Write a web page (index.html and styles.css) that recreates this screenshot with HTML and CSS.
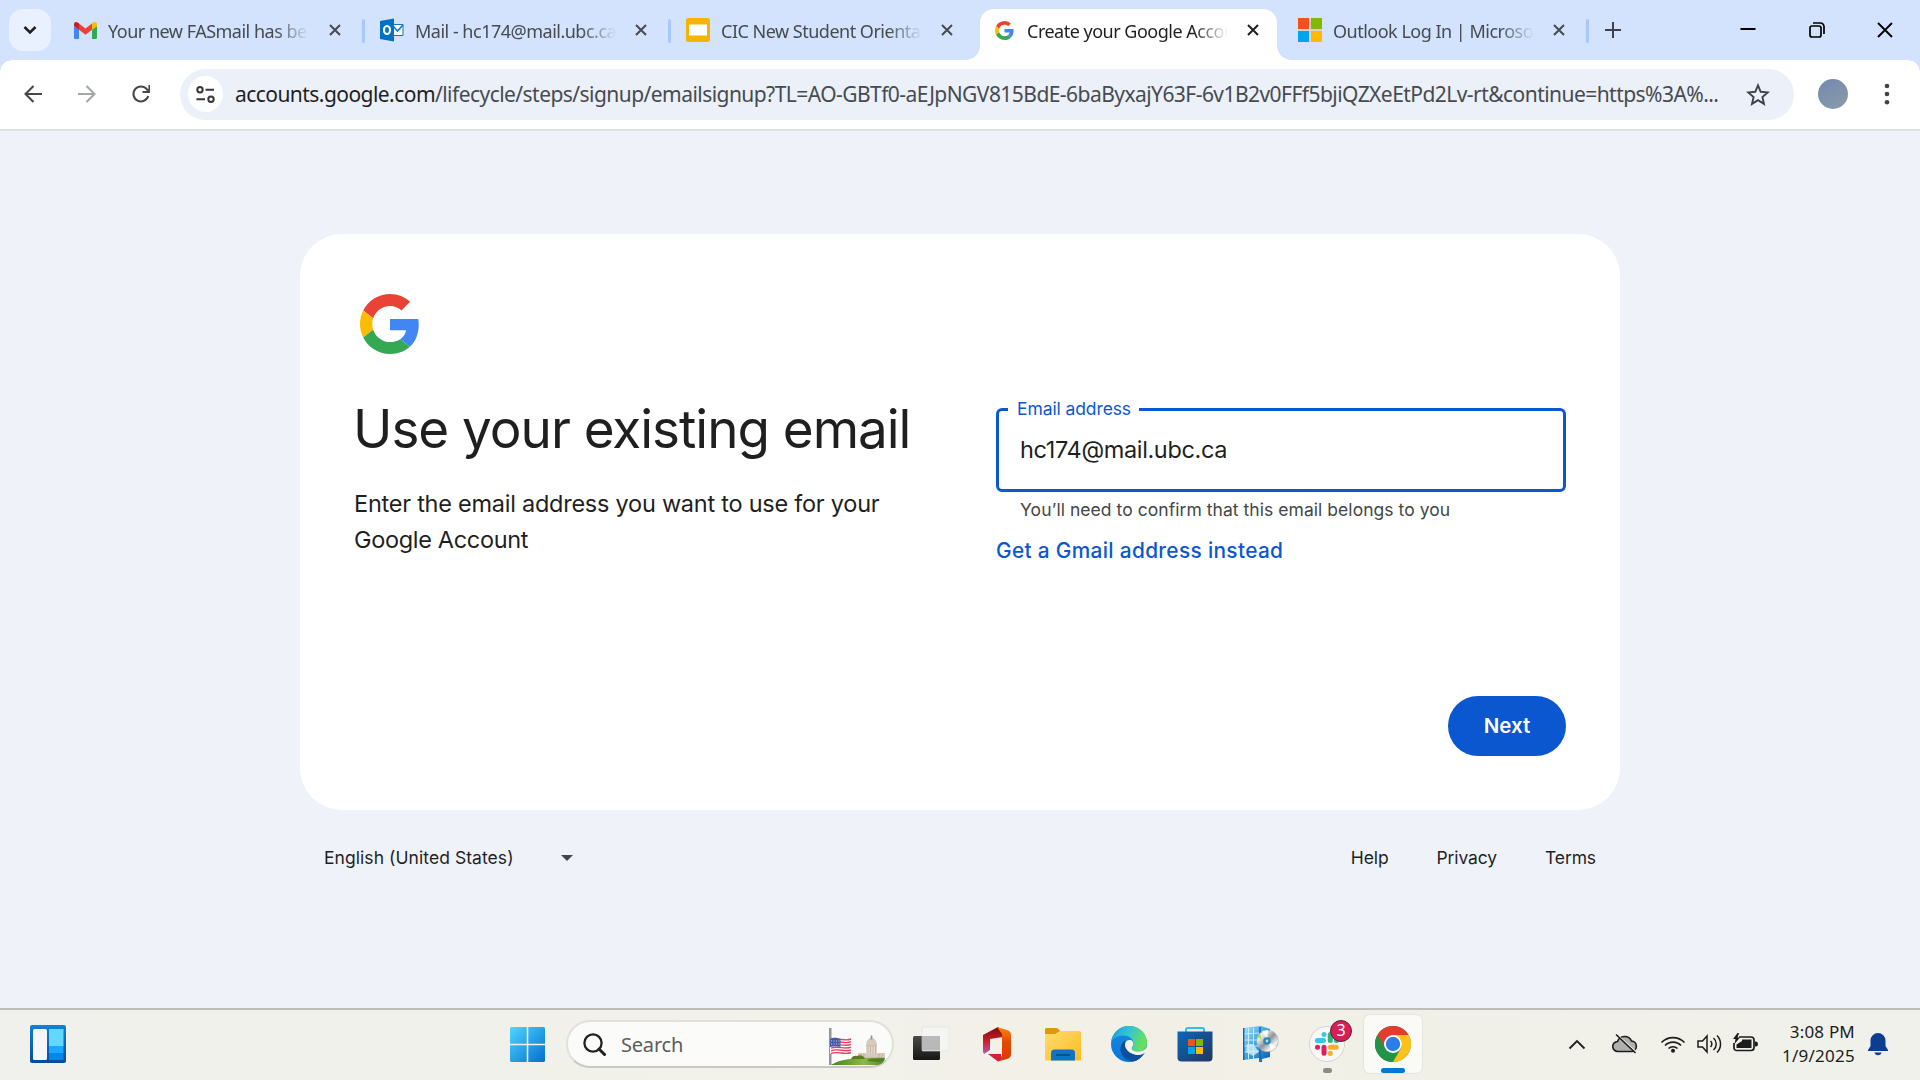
FILE: index.html
```html
<!DOCTYPE html>
<html lang="en">
<head>
<meta charset="utf-8">
<title>Create your Google Account</title>
<link rel="stylesheet" href="styles.css">
</head>
<body>
<svg class="defs" width="0" height="0" aria-hidden="true">
  <defs>
    <symbol id="google" viewBox="2 2 44 44">
      <path fill="#EA4335" d="M24 9.5c3.54 0 6.71 1.22 9.21 3.6l6.85-6.85C35.9 2.38 30.47 0 24 0 14.62 0 6.51 5.38 2.56 13.22l7.98 6.19C12.43 13.72 17.74 9.5 24 9.5z" transform="translate(2 2) scale(.9167)"/>
      <path fill="#4285F4" d="M46.98 24.55c0-1.57-.15-3.09-.38-4.55H24v9.02h12.94c-.58 2.96-2.26 5.48-4.78 7.18l7.73 6c4.51-4.18 7.09-10.36 7.09-17.65z" transform="translate(2 2) scale(.9167)"/>
      <path fill="#FBBC05" d="M10.53 28.59c-.48-1.45-.76-2.99-.76-4.59s.27-3.14.76-4.59l-7.98-6.19C.92 16.46 0 20.12 0 24c0 3.88.92 7.54 2.56 10.78l7.97-6.19z" transform="translate(2 2) scale(.9167)"/>
      <path fill="#34A853" d="M24 48c6.48 0 11.93-2.13 15.89-5.81l-7.73-6c-2.15 1.45-4.92 2.3-8.16 2.3-6.26 0-11.57-4.22-13.47-9.91l-7.98 6.19C6.51 42.62 14.62 48 24 48z" transform="translate(2 2) scale(.9167)"/>
    </symbol>
    <symbol id="x" viewBox="0 0 12 12"><path d="M1 1l10 10M11 1L1 11" fill="none" stroke="currentColor" stroke-width="2"/></symbol>
    <linearGradient id="gStart" x1="0" y1="0" x2="1" y2="1"><stop offset="0" stop-color="#4fd6ff"/><stop offset="1" stop-color="#0070d0"/></linearGradient>
    <linearGradient id="gPanel" x1="0" y1="0" x2="0" y2="1"><stop offset="0" stop-color="#0f82d8"/><stop offset="1" stop-color="#0b4a93"/></linearGradient>
    <linearGradient id="gDark" x1="0" y1="0" x2="0" y2="1"><stop offset="0" stop-color="#4a4a48"/><stop offset="1" stop-color="#161616"/></linearGradient>
    <linearGradient id="gOfficeL" x1="0" y1="0" x2="0" y2="1"><stop offset="0" stop-color="#7a0c0a"/><stop offset=".55" stop-color="#d01f2c"/><stop offset="1" stop-color="#b05cb0"/></linearGradient>
    <linearGradient id="gOfficeR" x1="0" y1="0" x2="0" y2="1"><stop offset="0" stop-color="#fb8305"/><stop offset=".45" stop-color="#e04a05"/><stop offset="1" stop-color="#d83a02"/></linearGradient>
    <linearGradient id="gFolder" x1="0" y1="0" x2="1" y2="1"><stop offset="0" stop-color="#ffdc70"/><stop offset="1" stop-color="#fdbc1e"/></linearGradient>
    <linearGradient id="gEdgeTop" x1="0" y1="0" x2="1" y2=".3"><stop offset="0" stop-color="#1b9ad8"/><stop offset=".5" stop-color="#34c3d8"/><stop offset="1" stop-color="#66e05a"/></linearGradient>
    <linearGradient id="gEdgeLeft" x1="0" y1="0" x2="0" y2="1"><stop offset="0" stop-color="#1a8cd8"/><stop offset="1" stop-color="#0a74dc"/></linearGradient>
    <linearGradient id="gStore" x1="0" y1="0" x2="1" y2="1"><stop offset="0" stop-color="#0a68bd"/><stop offset="1" stop-color="#24355e"/></linearGradient>
    <linearGradient id="gServer" x1="0" y1="0" x2="1" y2="1"><stop offset="0" stop-color="#a5e3fb"/><stop offset=".5" stop-color="#3aa2e0"/><stop offset="1" stop-color="#0e5aa2"/></linearGradient>
    <linearGradient id="gDisc" x1="0" y1="0" x2="1" y2="1"><stop offset="0" stop-color="#a8d8a0"/><stop offset=".25" stop-color="#ededed"/><stop offset=".5" stop-color="#8f9498"/><stop offset=".75" stop-color="#f4f4f4"/><stop offset="1" stop-color="#9a9fa5"/></linearGradient>
    <linearGradient id="gHill" x1="0" y1="0" x2="1" y2="0"><stop offset="0" stop-color="#3f8420"/><stop offset=".6" stop-color="#8db848"/><stop offset="1" stop-color="#4f8a2a"/></linearGradient>
  </defs>
</svg>

<header class="tabstrip">
  <button class="tab-search"><svg width="14" height="10" viewBox="0 0 14 10"><path d="M1.5 2l5.5 5.5L12.500 2" fill="none" stroke="#1f1f1f" stroke-width="2.500"/></svg></button>
  <div class="tab first">
    <span class="favicon"><svg width="23" height="17" viewBox="0 0 23 17"><path fill="#4285f4" d="M0 4l5 3.600V17H1.500A1.500 1.500 0 0 1 0 15.500z"/><path fill="#34a853" d="M23 4l-5 3.600V17h3.500a1.500 1.500 0 0 0 1.500-1.500z"/><path fill="#ea4335" d="M5 1.500l6.500 4.900L18 1.500v6.300l-6.500 4.900L5 7.800z"/><path fill="#c5221f" d="M0 2.200C0 .2 2.200-.6 3.800.6L5 1.500v6.300L0 4.100z"/><path fill="#fbbc04" d="M23 2.200c0-2-2.200-2.800-3.800-1.600L18 1.500v6.300l5-3.700z"/></svg></span>
    <span class="tab-title">Your new FASmail has been</span>
    <svg class="tab-close"><use href="#x"/></svg>
  </div>
  <div class="tab">
    <span class="favicon"><svg width="24" height="24" viewBox="0 0 24 24"><path fill="#fff" stroke="#1475c8" d="M12 6.500h11v11H12z"/><path fill="none" stroke="#1475c8" stroke-width="1.600" d="M13 8l4.500 5L23 7"/><path fill="#0072c6" d="M0 3L14 .5v23L0 21z"/><ellipse cx="7" cy="12" rx="3" ry="4" fill="none" stroke="#fff" stroke-width="2.200"/></svg></span>
    <span class="tab-title">Mail - hc174@mail.ubc.ca</span>
    <svg class="tab-close"><use href="#x"/></svg>
  </div>
  <div class="tab plain">
    <span class="favicon"><svg width="24" height="24" viewBox="0 0 24 24"><rect width="24" height="24" rx="2.500" fill="#f5b400"/><path fill="#fff" d="M3 6.500h18v11H3z"/></svg></span>
    <span class="tab-title">CIC New Student Orientation</span>
    <svg class="tab-close"><use href="#x"/></svg>
  </div>
  <div class="tab active">
    <span class="favicon"><svg width="19" height="19"><use href="#google"/></svg></span>
    <span class="tab-title">Create your Google Account</span>
    <svg class="tab-close"><use href="#x"/></svg>
  </div>
  <div class="tab">
    <span class="favicon"><svg width="24" height="24" viewBox="0 0 24 24"><path fill="#d5d5d5" d="M0 0h24v24H0z"/><path fill="#f25022" d="M0 0h11v11H0z"/><path fill="#7fba00" d="M13 0h11v11H13z"/><path fill="#00a4ef" d="M0 13h11v11H0z"/><path fill="#ffb900" d="M13 13h11v11H13z"/></svg></span>
    <span class="tab-title">Outlook Log In | Microsoft</span>
    <svg class="tab-close"><use href="#x"/></svg>
  </div>
  <svg class="new-tab" width="16" height="16" viewBox="0 0 16 16"><path d="M8 0v16M0 8h16" stroke="#3f4247" stroke-width="2"/></svg>
  <div class="window-buttons">
    <svg width="16" height="16" viewBox="0 0 16 16"><path d="M.5 7h15" stroke="#000" stroke-width="2"/></svg>
    <svg width="16" height="16" viewBox="0 0 16 16"><rect x="1" y="4" width="11" height="11" rx="2" fill="none" stroke="#000" stroke-width="1.700"/><path d="M4 1h7.500A3.500 3.500 0 0 1 15 4.500V12" fill="none" stroke="#000" stroke-width="1.700"/></svg>
    <svg width="16" height="16" viewBox="0 0 16 16"><path d="M1 1l14 14M15 1L1 15" stroke="#000" stroke-width="1.900"/></svg>
  </div>
</header>

<nav class="toolbar">
  <svg class="nav-icon" width="18" height="18" viewBox="0 0 18 18"><path d="M9.500 1L1.500 9l8 8M1.500 9H18" fill="none" stroke="#45484c" stroke-width="2.100"/></svg>
  <svg class="nav-icon" width="18" height="18" viewBox="0 0 18 18"><path d="M8.500 1l8 8-8 8M16.500 9H0" fill="none" stroke="#a3a6a9" stroke-width="2.100"/></svg>
  <svg class="nav-icon" width="18" height="18" viewBox="0 0 18 18"><path d="M16.200 11A7.500 7.500 0 1 1 14.800 4.200L17 6.500M17.500 0v7h-7" fill="none" stroke="#45484c" stroke-width="2.100"/></svg>
  <div class="omnibox">
    <span class="site-chip"><svg width="19" height="17" viewBox="0 0 19 17"><g fill="none" stroke="#33363a" stroke-width="2"><circle cx="4" cy="3.700" r="2.700"/><path d="M9.500 3.700H18M.5 13.300H9"/><circle cx="15" cy="13.300" r="2.700"/></g></svg></span>
    <span class="url"><b>accounts.google.com</b>/lifecycle/steps/signup/emailsignup?TL=AO-GBTf0-aEJpNGV815BdE-6baByxajY63F-6v1B2v0FFf5bjiQZXeEtPd2Lv-rt&amp;continue=https%3A%...</span>
    <svg class="star" width="24" height="23" viewBox="0 0 24 23"><path d="M12 2.300l2.700 6.500 7 .6-5.300 4.600 1.600 6.900L12 17.200 6 20.900l1.600-6.900-5.300-4.600 7-.6z" fill="none" stroke="#3f4247" stroke-width="1.900"/></svg>
  </div>
  <span class="avatar"></span>
  <svg class="menu" width="6" height="22" viewBox="0 0 6 22"><g fill="#3f4247"><circle cx="3" cy="3" r="2.300"/><circle cx="3" cy="11" r="2.300"/><circle cx="3" cy="19.300" r="2.300"/></g></svg>
</nav>

<main class="page">
  <section class="card">
    <svg class="logo" width="60" height="60"><use href="#google"/></svg>
    <div class="columns">
      <div class="intro">
        <h1>Use your existing email</h1>
        <p><span class="p1">Enter the email address you want to use for your</span><br><span class="p2">Google Account</span></p>
      </div>
      <div class="form">
        <div class="field">
          <span class="label">Email address</span>
          <span class="value">hc174@mail.ubc.ca</span>
        </div>
        <div class="helper">You’ll need to confirm that this email belongs to you</div>
        <a class="link">Get a Gmail address instead</a>
      </div>
    </div>
    <div class="actions"><button class="next">Next</button></div>
  </section>
  <footer class="footer">
    <span class="lang">English (United States)</span>
    <svg class="caret" width="12" height="6" viewBox="0 0 12 6"><path fill="#444746" d="M0 0h12L6 6z"/></svg>
    <a class="help">Help</a><a class="privacy">Privacy</a><a class="terms">Terms</a>
  </footer>
</main>

<div class="taskbar">
  <div class="widgets"><svg width="36" height="38" viewBox="0 0 36 38"><rect width="36" height="38" rx="2" fill="url(#gPanel)"/><rect x="3" y="4" width="14" height="31" rx="1.500" fill="#f6f6f8"/><path fill="#62d8ff" d="M19 4h14.500v17H19z"/><path fill="#1ba6ff" d="M19 21h14.500v7H19z"/><path fill="#0585ee" d="M19 28h14.500v7H19z"/></svg></div>
  <div class="start"><svg width="35" height="35" viewBox="0 0 35 35"><path fill="url(#gStart)" d="M1.500 0H16.700V16.700H0V1.500A1.500 1.500 0 0 1 1.500 0zM18.300 0h15.200A1.500 1.500 0 0 1 35 1.500v15.200H18.300zM0 18.300h16.700V35H1.500A1.500 1.500 0 0 1 0 33.500zM18.300 18.300H35v15.200a1.500 1.500 0 0 1-1.500 1.500H18.300z"/></svg></div>
  <div class="search">
    <svg width="23" height="23" viewBox="0 0 23 23"><circle cx="10" cy="10" r="8.600" fill="none" stroke="#222" stroke-width="2.300"/><path d="M16 16l5.500 5.500" stroke="#222" stroke-width="3" stroke-linecap="round"/></svg>
    <span class="search-text">Search</span>
    <svg class="capitol" width="57" height="37" viewBox="0 0 57 37">
      <path fill="#d8c9bd" d="M29 25h27v6H29z"/><path fill="#e6dad0" d="M37 18h11v8H37z"/><path fill="#d9cabf" d="M37 18c0-5 2-7.500 5.500-8.500C46 10.500 48 13 48 18z"/><path stroke="#6f9c8c" stroke-width="1.600" d="M42.500 7.500v4"/><path stroke="#b3a395" stroke-width=".7" d="M39 19v7M41.500 19v7M44 19v7M46.500 19v7M37 18h11M32 26v4M35 26v4M50 26v4M53 26v4"/>
      <path fill="url(#gHill)" d="M2 37c8-5 20-8 54-7-1 4-3 6-7 7z"/><path fill="#5c7a20" d="M22 31c1-3 4-4 6-3 3-2 7 0 8 3zM38 33c3-3 6-3 8-2 3-1 7 0 9-1-1 3-3 4-5 4z"/>
      <path fill="#92959b" d="M0 0h2.500v37H0z"/><path fill="#fff" d="M1 11c7-3 14 2 21-1v14c-7 3-14-1-21 2z"/>
      <path fill="none" stroke="#ec3c61" stroke-width="1.400" d="M2 12c7-3 14 2 20-1M2 14.700c7-3 14 2 20-1M2 17.400c7-3 14 2 20-1M2 20.100c7-3 14 2 20-1M2 22.800c7-3 14 2 20-1M2 25.500c7-3 14 2 20-1"/><path fill="#4658aa" d="M1 11c4-2 7-1 10.500 0v8c-4-1-7-1-10.500 0z"/><path stroke="#c7d2f2" stroke-dasharray="1 1.500" d="M2 13h9M2 16h9"/>
    </svg>
  </div>
  <div class="apps">
    <div class="app"><svg width="36" height="36" viewBox="0 0 36 36"><rect y="10" width="27" height="24" rx="1.500" fill="url(#gDark)"/><rect x="9" y="1" width="27" height="24" rx="1" fill="#f5f5f5" stroke="#dcdcd8" stroke-width=".6"/><path fill="#b9b9b9" d="M9 10h18v14.500H9z"/></svg></div>
    <div class="app"><svg width="28" height="36" viewBox="0 0 28 36"><path fill="url(#gOfficeL)" d="M0 9L15 1l5 4v6L7 13v11l-6 4-1-2z"/><path fill="url(#gOfficeR)" d="M14 1l10 3q4 1 4 5v19q0 4-4 5l-9 2.500 4-6V8z"/><path fill="#d71e38" d="M5 28h13v5l-3 2.500z"/></svg></div>
    <div class="app"><svg width="36" height="36" viewBox="0 0 36 36"><path fill="#dc9a09" d="M0 3.500A1.500 1.500 0 0 1 1.500 2H12l4 3.500L11 10H0z"/><path fill="url(#gFolder)" d="M0 8h10l5-3h19.500A1.500 1.500 0 0 1 36 6.500v28H0z"/><path fill="#0f73c9" d="M6 34.500V27q0-3.500 3.500-3.500h17Q30 23.500 30 27v7.500z"/><path stroke="#09457e" stroke-width="1.500" d="M11 29h14"/></svg></div>
    <div class="app"><svg width="36" height="36" viewBox="0 0 36 36"><circle cx="18" cy="18" r="18" fill="url(#gEdgeLeft)"/><path fill="url(#gEdgeTop)" d="M0 16C2 6 9 0 18 0c11 0 18 8 18 16.500 0 6-4 9-9 9-4 0-6-1-6-3 0-1 1.500-2 1.500-5C22.500 13 18 9.500 12.500 9.500 7 9.500 2 12 0 16z"/><path fill="#0c509c" d="M14 14.500c-3 2-4.500 5-4.500 8.500 0 6 5 11.500 12.500 12.500 5-.8 9-4.500 11.500-9C27 30.500 19 28.500 16 23c-1.500-3-1-6-2-8.500z"/><path fill="#f2f1ea" d="M18 14c3-.5 4.600 1.300 4.300 4.500-.3 2-1.500 2.600-1.500 3.700 0 2.200 2.500 3.300 6 3.300 4 0 7-1.500 9.200-4.500L37 25l-3.500 2c-3 2-6.500 2.700-10 1.500C18 27 14 23 14 19c0-3 1.500-4.600 4-5z"/></svg></div>
    <div class="app"><svg width="36" height="36" viewBox="0 0 36 36"><path fill="none" stroke="#34bdf2" stroke-width="2" d="M9 7V3.500Q9 2 10.500 2h15Q27 2 27 3.500V7"/><path fill="url(#gStore)" d="M.5 5.500h35v26q0 4-4 4h-27q-4 0-4-4z"/><path fill="#f25022" d="M11 13h7v7h-7z"/><path fill="#7fba00" d="M19 13h7v7h-7z"/><path fill="#00a4ef" d="M11 21h7v7h-7z"/><path fill="#ffb900" d="M19 21h7v7h-7z"/></svg></div>
    <div class="app"><svg width="36" height="36" viewBox="0 0 36 36"><path fill="url(#gServer)" d="M0 2L18 0l9 3v28l-8 2v3h-3v-4L0 34z"/><path fill="none" stroke="#d2f0fc" stroke-width=".9" d="M1 8l15-1M1 14h15M1 20h15M1 26l15-1M5.500 2v31M10.500 2v31"/><path stroke="#1465ae" stroke-width="1.500" d="M.7 2v32M17 1v32"/><path fill="#d3ecf8" opacity=".8" d="M4 18h6l6 8-6 4-7-4z"/><circle cx="24.500" cy="15" r="10.800" fill="url(#gDisc)" stroke="#a4a9ae" stroke-width=".6"/><path fill="#fff" opacity=".75" d="M24.500 15L19 5l6-1zM24.500 15l4 10 5-4z"/><path fill="#a4e02f" d="M14.500 11l4 2-1.500-5z"/><circle cx="24" cy="15" r="3.800" fill="#258bb5"/><circle cx="24" cy="15" r="1.400" fill="#bcdce9"/></svg></div>
    <div class="app slack">
      <svg width="36" height="36" viewBox="0 0 36 36"><circle cx="18" cy="18" r="17.500" fill="#f8f8f8" stroke="#d3d3cf"/><g stroke-width="5" stroke-linecap="round"><path stroke="#36c5f0" d="M8.500 14.500h6M15 8.500v.1"/><path stroke="#2eb67d" d="M21.300 8.500v6M27.500 14.500h.1"/><path stroke="#ecb22e" d="M21.300 21.200h6M21.300 27.300v.1"/><path stroke="#e01e5a" d="M15 21.200v6M8.500 21.200h.1"/></g></svg>
      <span class="badge">3</span>
    </div>
    <div class="app chrome"><svg width="36" height="36" viewBox="0 0 36 36"><circle cx="18" cy="18" r="18" fill="#239447"/><path fill="#e33b2e" d="M2.400 9A18 18 0 0 1 33.600 9H18l-7.800 13.500z"/><path fill="#239447" d="M2.400 9l7.800 13.500A9 9 0 0 0 18 27l0 9A18 18 0 0 1 2.400 9z"/><path fill="#fcc21b" d="M33.600 9A18 18 0 0 1 18 36l7.800-13.500A9 9 0 0 0 25.800 13.500L18 9z"/><circle cx="18" cy="18" r="9" fill="#fff"/><circle cx="18" cy="18" r="7.200" fill="#2b7de9"/></svg></div>
  </div>
  <div class="tray">
    <svg class="chev" width="18" height="11" viewBox="0 0 18 11"><path d="M1.500 9.500L9 2l7.500 7.500" fill="none" stroke="#222" stroke-width="1.900"/></svg>
    <svg class="cloud" width="26" height="20" viewBox="0 0 26 20"><path d="M6 17.500a5 5 0 0 1-.5-10A7.500 7.500 0 0 1 19.500 7a5.300 5.300 0 0 1 .5 10.500z" fill="#b0b0ae" stroke="#1c1c1c" stroke-width="1.600"/><path d="M5.500 1L24.500 18" stroke="#e8e8e2" stroke-width="1.300"/><path d="M4 .5L23.500 19" stroke="#1c1c1c" stroke-width="1.500"/></svg>
    <svg class="wifi" width="26" height="18" viewBox="0 0 26 18"><g fill="none" stroke="#1c1c1c" stroke-width="1.600"><path d="M1.500 7.500a16 16 0 0 1 23 0M5 10.500a11.200 11.200 0 0 1 16 0M8.500 13.500a6.500 6.500 0 0 1 9 0"/></g><circle cx="13" cy="15.700" r="2" fill="#1c1c1c"/></svg>
    <svg class="speaker" width="25" height="20" viewBox="0 0 25 20"><g fill="none" stroke="#1c1c1c" stroke-width="1.500"><path d="M1 7h4.500L10 2v16L5.500 13H1zM13.500 7a4 4 0 0 1 0 6M16.500 4a8 8 0 0 1 0 12M20 1.500a12 12 0 0 1 0 17"/></g></svg>
    <svg class="battery" width="25" height="20" viewBox="0 0 25 20"><path d="M6 4h12q3 0 3 3v7.500q0 3-3 3H4q-3 0-3-3V10" fill="none" stroke="#1c1c1c" stroke-width="1.700"/><path fill="#1c1c1c" d="M9 6.500h9.500V15h-15v-3.500L9 8zM22 8.500h1q2 0 2 2.500t-2 2.500h-1zM4.500 0L0 6h2.500L1.500 11 7 4.500H4.500L6 0z"/></svg>
    <div class="clock"><span class="time">3:08 PM</span><span class="date">1/9/2025</span></div>
    <svg class="bell" width="20" height="24" viewBox="0 0 20 24"><path fill="#0b3e91" d="M2.500 8.500a7.500 7.500 0 0 1 15 0V14l2.500 4v1H0v-1l2.500-4zM6.500 20.500h7A3.600 3.600 0 0 1 6.500 20.500z"/></svg>
  </div>
</div>
</body>
</html>
```
FILE: styles.css
```css
* { box-sizing: border-box; }
body {
  margin: 0;
  width: 1920px;
  height: 1080px;
  overflow: hidden;
  display: flex;
  flex-direction: column;
  background: #eff3f9;
  font-family: Inter, Roboto, sans-serif;
  color: #1f1f1f;
}
svg { display: block; flex: none; }
button { border: 0; padding: 0; font: inherit; }
.defs { position: absolute; }

/* Tab strip */
.tabstrip {
  height: 60px;
  flex: none;
  display: flex;
  align-items: center;
  background: #d3e2fd;
  padding-left: 9px;
  font-family: "Noto Sans", sans-serif;
}
.tab-search {
  width: 42px;
  height: 42px;
  margin-right: 6px;
  border-radius: 14px;
  background: #e9f0fe;
  display: grid;
  place-items: center;
}
.tab {
  width: 306px;
  height: 51px;
  margin-top: 9px;
  padding: 0 22px 9px 17px;
  display: flex;
  align-items: center;
  position: relative;
  flex: none;
  color: #474a4f;
}
.tab::after {
  content: "";
  position: absolute;
  right: -2px;
  top: 10px;
  width: 3px;
  height: 24px;
  border-radius: 2px;
  background: #a8c7fa;
}
.tab.plain::after { display: none; }
.favicon { width: 24px; display: grid; place-items: center; margin-right: 11px; flex: none; }
.first .favicon { width: 22px; margin-right: 12px; }
.tab-title {
  width: 203px;
  overflow: hidden;
  white-space: nowrap;
  font-size: 18px;
  line-height: 30px;
  padding-top: 1px;
  letter-spacing: -0.5px;
  -webkit-mask-image: linear-gradient(90deg, #000 82%, transparent 99%);
  mask-image: linear-gradient(90deg, #000 82%, transparent 99%);
}
.tab-close { width: 12px; height: 12px; margin-left: auto; }
.tab.active { color: #1f1f1f; }
.tab.active::before {
  content: "";
  position: absolute;
  inset: 0 4px 0 5px;
  background: #fff;
  border-radius: 14px 14px 0 0;
}
.tab.active > * { position: relative; }
.tab.active::after {
  left: -9px;
  right: -10px;
  top: auto;
  bottom: 0;
  width: auto;
  height: 14px;
  border-radius: 0;
  background:
    radial-gradient(circle at 0 0, transparent 13.5px, #fff 14px) 0 0 / 14px 14px no-repeat,
    radial-gradient(circle at 100% 0, transparent 13.5px, #fff 14px) 100% 0 / 14px 14px no-repeat;
}
.new-tab { margin-left: 18px; }
.window-buttons { margin-left: auto; padding-right: 27px; display: flex; gap: 52.5px; }

/* Toolbar */
.toolbar {
  height: 71px;
  flex: none;
  display: flex;
  align-items: center;
  padding: 0 30px 1px 24px;
  border-bottom: 2px solid #dfe1e0;
  background: #fff;
  position: relative;
}
.toolbar::before {
  content: "";
  position: absolute;
  inset: 0 0 auto 0;
  height: 12px;
  background:
    radial-gradient(circle at 100% 100%, transparent 11.500px, #d3e2fd 12px) 0 0 / 12px 12px no-repeat,
    radial-gradient(circle at 0 100%, transparent 11.500px, #d3e2fd 12px) 100% 0 / 12px 12px no-repeat;
}
.nav-icon { margin-right: 36px; }
.omnibox {
  width: 1614px;
  height: 51px;
  margin-left: -6px;
  border-radius: 26px;
  background: #ebf0f9;
  display: flex;
  align-items: center;
  padding: 0 24px 0 8px;
}
.site-chip {
  width: 35px;
  height: 36px;
  border-radius: 50%;
  background: #fff;
  display: grid;
  place-items: center;
  margin-right: 12px;
}
.url {
  font: 21px/30px "Noto Sans", sans-serif;
  letter-spacing: -0.55px;
  white-space: nowrap;
  color: #474a4f;
}
.url b { font-weight: 400; color: #1f1f1f; }
.star { margin-left: auto; }
.avatar {
  width: 30px;
  height: 30px;
  margin-left: 24px;
  border-radius: 50%;
  background: linear-gradient(150deg, #7288b0, #8d9ca8);
}
.menu { margin-left: auto; }

/* Page */
.page { flex: 1; padding: 103px 300px 0; }
.card {
  height: 576px;
  border-radius: 42px;
  background: #fff;
  padding: 60px 54px 54px;
  display: flex;
  flex-direction: column;
}
.logo { margin-left: 6px; }
.columns { display: flex; margin-top: 42px; }
.intro { width: 642px; }
h1 {
  margin: 0 0 0 -1px;
  font-size: 53px;
  line-height: 66px;
  font-weight: 400;
  letter-spacing: -1.03px;
  white-space: nowrap;
}
.intro p { margin: 24px 0 0; font-size: 23.500px; line-height: 36px; white-space: nowrap; }
.p1 { letter-spacing: -0.25px; }
.p2 { letter-spacing: -0.33px; }
.form { width: 570px; padding-top: 12px; }
.field {
  height: 84px;
  border: 3px solid #0b57d0;
  border-radius: 6px;
  position: relative;
  display: flex;
  align-items: center;
  padding: 0 21px 2px;
}
.label {
  position: absolute;
  left: 9px;
  top: -14px;
  padding: 0 8px 0 9px;
  background: #fff;
  color: #0b57d0;
  font-size: 17.500px;
  line-height: 24px;
  letter-spacing: -0.1px;
  white-space: nowrap;
}
.value { font-size: 23.500px; letter-spacing: -0.36px; }
.helper {
  padding-left: 24px;
  margin-top: 6px;
  font-size: 17.500px;
  line-height: 24px;
  color: #444746;
  letter-spacing: 0.05px;
  white-space: nowrap;
}
.link {
  display: block;
  margin-top: 14px;
  font-size: 20.800px;
  line-height: 30px;
  font-weight: 500;
  letter-spacing: 0.35px;
  color: #0b57d0;
}
.actions { margin-top: auto; display: flex; justify-content: flex-end; }
.next {
  width: 118px;
  height: 60px;
  padding-bottom: 2px;
  border-radius: 30px;
  background: #0b57d0;
  color: #fff;
  font-size: 20.500px;
  font-weight: 600;
}
.footer {
  display: flex;
  align-items: center;
  padding: 0 24px;
  margin-top: 36px;
  font-size: 17.500px;
  line-height: 24px;
}
.lang { width: 237px; letter-spacing: 0.06px; }
.help { margin-left: auto; }
.privacy, .terms { margin-left: 48px; }
.help, .privacy, .terms { letter-spacing: -0.12px; }

/* Taskbar */
.taskbar {
  height: 72px;
  flex: none;
  display: flex;
  align-items: center;
  padding-bottom: 2px;
  border-top: 2px solid #bdbdb9;
  background: linear-gradient(90deg, #f0f1ec, #f2f1ea 45%, #f2f0e6 60%, #f0f1eb);
  font-family: "Noto Sans", sans-serif;
}
.widgets { padding-left: 30px; width: 510px; }
.start { width: 56px; }
.search {
  width: 328px;
  height: 48px;
  border: 2px solid #e1e1da;
  border-bottom-color: #c9c9c4;
  border-radius: 24px;
  background: #fbfbf9;
  display: flex;
  align-items: center;
  padding: 0 6px 0 15px;
}
.search-text { margin-left: 15px; font-size: 20px; letter-spacing: -0.2px; color: #5d5d5b; }
.capitol { margin-left: auto; margin-top: 4px; }
.apps { display: flex; margin-left: 4px; }
.app {
  width: 66px;
  height: 58px;
  display: grid;
  place-items: center;
  position: relative;
}
.slack::after, .chrome::after {
  content: "";
  position: absolute;
  bottom: 0;
  left: 29px;
  width: 9px;
  height: 5px;
  border-radius: 3px;
  background: #8a8a86;
}
.chrome { width: 58px; margin-left: 4px; border-radius: 6px; background: #fafaf7; box-shadow: 0 0 0 1px #e5e5de; }
.chrome::after { left: 17px; width: 24px; background: #0078d4; }
.badge {
  position: absolute;
  left: 36px;
  top: 5px;
  width: 22px;
  height: 22px;
  border-radius: 50%;
  background: #dc1c56;
  border: 1.500px solid #4a2733;
  color: #fff;
  font-size: 16px;
  line-height: 19px;
  text-align: center;
}
.tray { margin-left: auto; display: flex; align-items: center; padding-right: 32px; }
.cloud { margin-left: 26px; }
.wifi { margin-left: 22px; }
.speaker { margin-left: 11px; }
.battery { margin-left: 11px; margin-top: -3px; }
.clock {
  width: 97px;
  display: flex;
  flex-direction: column;
  align-items: flex-end;
  font-size: 17px;
  line-height: 24px;
  color: #1c1c1c;
}
.time { letter-spacing: 0.2px; }
.date { letter-spacing: 0.25px; }
.bell { margin-left: 13px; }
```
